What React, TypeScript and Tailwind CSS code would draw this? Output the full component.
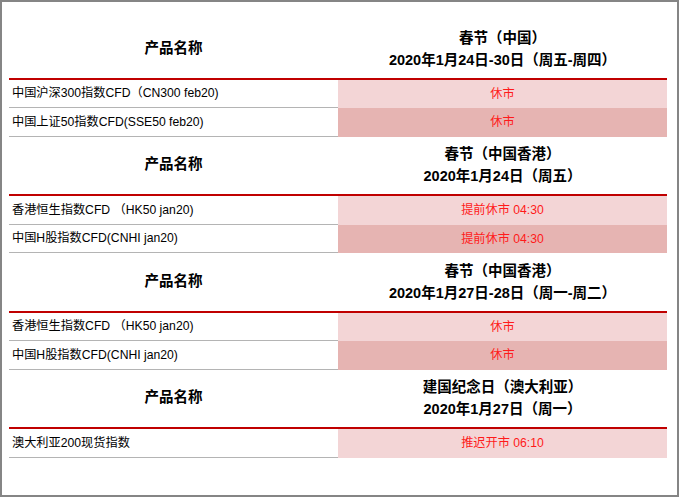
import React from "react";

type Row = { name: string; status: string };
type Section = { title: string; date: string; rows: Row[] };

const sections: Section[] = [
  {
    title: "春节（中国）",
    date: "2020年1月24日-30日（周五-周四）",
    rows: [
      { name: "中国沪深300指数CFD（CN300 feb20)", status: "休市" },
      { name: "中国上证50指数CFD(SSE50 feb20)", status: "休市" },
    ],
  },
  {
    title: "春节（中国香港）",
    date: "2020年1月24日（周五）",
    rows: [
      { name: "香港恒生指数CFD （HK50 jan20)", status: "提前休市 04:30" },
      { name: "中国H股指数CFD(CNHI jan20)", status: "提前休市 04:30" },
    ],
  },
  {
    title: "春节（中国香港）",
    date: "2020年1月27日-28日（周一-周二）",
    rows: [
      { name: "香港恒生指数CFD （HK50 jan20)", status: "休市" },
      { name: "中国H股指数CFD(CNHI jan20)", status: "休市" },
    ],
  },
  {
    title: "建国纪念日（澳大利亚）",
    date: "2020年1月27日（周一）",
    rows: [{ name: "澳大利亚200现货指数", status: "推迟开市 06:10" }],
  },
];

export default function App() {
  return (
    <div
      className="w-[679px] h-[497px] border-2 border-[#858585] bg-white box-border pl-[7px] pr-[10px] pt-[18px] text-black"
      style={{ fontFamily: '"Liberation Sans", "Noto Sans CJK SC", sans-serif' }}
    >
      {sections.map((s, si) => (
        <div key={si} className="flex flex-col">
          <div className="flex h-[57.5px]">
            <div className="w-1/2 flex items-center justify-center font-bold text-[14.5px]">
              产品名称
            </div>
            <div className="w-1/2 flex flex-col items-center justify-center font-bold text-[14.5px] leading-[22px]">
              <div>{s.title}</div>
              <div>{s.date}</div>
            </div>
          </div>
          <div className="h-[2px] bg-[#c00000]" />
          {s.rows.map((r, ri) => (
            <div key={ri} className="flex h-[28.5px]">
              <div className="w-1/2 flex items-center pl-[3px] border-b border-[#b4b4b4] text-[12.2px] whitespace-nowrap">
                {r.name}
              </div>
              <div
                className={
                  ri % 2 === 0
                    ? "w-1/2 flex items-center justify-center bg-[#f3d5d6] text-[#ff1a1a] text-[12.2px]"
                    : "w-1/2 flex items-center justify-center bg-[#e6b4b2] text-[#ff1a1a] text-[12.2px]"
                }
              >
                {r.status}
              </div>
            </div>
          ))}
        </div>
      ))}
    </div>
  );
}
